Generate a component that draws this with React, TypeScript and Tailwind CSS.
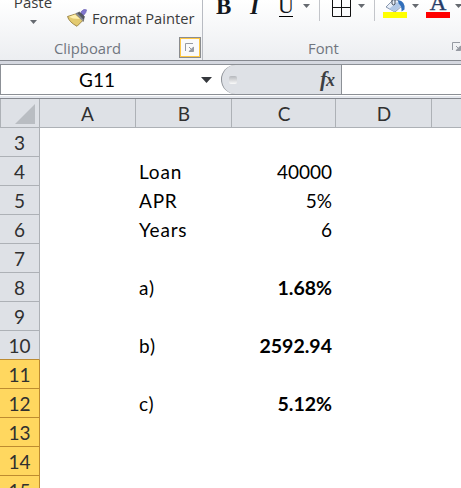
import React from "react";
import clsx from "clsx";

type Row = {
  id: number;
  label?: string;
  value?: string;
  bold?: boolean;
};

const rows: Row[] = [
  { id: 3 },
  { id: 4, label: "Loan", value: "40000" },
  { id: 5, label: "APR", value: "5%" },
  { id: 6, label: "Years", value: "6" },
  { id: 7 },
  { id: 8, label: "a)", value: "1.68%", bold: true },
  { id: 9 },
  { id: 10, label: "b)", value: "2592.94", bold: true },
  { id: 11 },
  { id: 12, label: "c)", value: "5.12%", bold: true },
  { id: 13 },
  { id: 14 },
  { id: 15 },
];

function Caret({ className }: { className?: string }) {
  return (
    <svg className={clsx("shrink-0", className)} width="7" height="4" viewBox="0 0 7 4">
      <path d="M0 0h7L3.500 4z" fill="#666a70" />
    </svg>
  );
}

function BrushIcon() {
  return (
    <svg className="shrink-0" width="20" height="18" viewBox="0 0 20 18">
      <path d="M13.500 5.500l1-3.200Q17-.8 19.500.8Q20 3 16.500 6.500z" fill="#8177ce" stroke="#6259ab" strokeWidth=".5" />
      <path d="M9 4.500L12.500 3l5 4.500-1.300 5z" fill="#555960" stroke="#3d4147" strokeWidth=".5" />
      <path d="M8.500 5L.5 7.500q1.500 5.500 9.500 9.800l6-6z" fill="#e3ca70" stroke="#8c7434" strokeWidth=".8" />
      <path d="M8 5.500L2 7.800l4 1.800L13 10z" fill="#fff0ac" />
      <path d="M9.500 4.500l6.500 6.800" stroke="#8c9097" strokeWidth="1.800" />
    </svg>
  );
}

function LauncherIcon() {
  return (
    <svg className="shrink-0" width="10" height="10" viewBox="0 0 10 10" fill="none" stroke="#969aa2">
      <path d="M.5 8V.5H8" />
      <path d="M4 4l3.500 3.500" />
      <path d="M8.500 3.500v5h-5z" fill="#969aa2" stroke="none" />
      <path d="M8.500 4v4.500H4" />
    </svg>
  );
}

function BorderIcon() {
  return (
    <svg className="shrink-0" width="19" height="17" viewBox="0 0 19 17" fill="none" stroke="#111">
      <path d="M.5 0v16.500h18V0M9.500 0v16M0 7.500h19" />
    </svg>
  );
}

function FillIcon() {
  return (
    <svg className="shrink-0" width="24" height="18" viewBox="0 0 24 18">
      <path d="M3 7l7-7h4l6 5-8 7z" fill="#e8eff9" stroke="#6c7f9b" strokeWidth=".8" />
      <path d="M6 9l8-7 4 3.500-6 6z" fill="#b1c8e6" />
      <path d="M9 0v4q2 2 3 0V0" fill="none" stroke="#48505c" />
      <path d="M15 0q7.500 1 6.500 9.500l-3 2Q19 6 15.500 3.500z" fill="#326fba" />
      <path d="M0 12h24v6H0z" fill="#ff0" />
    </svg>
  );
}

function RibbonSeparator() {
  return <div className="h-[21px] w-px shrink-0 bg-[#c3c5ca]" />;
}

function Ribbon() {
  return (
    <div className="flex h-[60px] shrink-0 overflow-hidden bg-linear-to-b from-white to-[#eceef1] font-['Open_Sans',sans-serif] text-[15px] text-[#3b3b3b]">
      <div className="flex w-[202px] shrink-0 flex-col">
        <div className="flex h-[36px] shrink-0">
          <div className="flex w-[66px] shrink-0 flex-col items-center">
            <span className="-mt-[8px] leading-[20px]">Paste</span>
            <Caret className="mt-[8px]" />
          </div>
          <div className="flex items-start pt-[9px] pl-px">
            <BrushIcon />
            <span className="-mt-px ml-[5px] text-[14.7px] leading-[20px] whitespace-nowrap">Format Painter</span>
          </div>
        </div>
        <div className="flex justify-between">
          <span className="pl-[54px] text-[14.8px] leading-[25px] text-[#70767f]">Clipboard</span>
          <div className="mt-[1px] mr-px flex h-[21px] w-[22px] items-center justify-center border border-[#8a8c8f] bg-[#fafafa] shadow-[inset_0_0_0_1px_#ffc843]">
            <LauncherIcon />
          </div>
        </div>
      </div>
      <div className="w-px shrink-0 bg-[#b8bbc2]" />
      <div className="flex w-[258px] shrink-0 flex-col">
        <div className="flex h-[36px] shrink-0 items-start font-['Liberation_Serif',serif] text-[23px] leading-[24px] text-[#14181d]">
          <span className="-mt-[5px] ml-[13px] w-[31px] shrink-0 font-bold">B</span>
          <span className="-mt-[5px] w-[32px] shrink-0 pl-[3px] font-bold italic">I</span>
          <span className="-mt-[6px] flex h-[23px] w-[14px] shrink-0 justify-center border-b border-black text-[22px]">U</span>
          <Caret className="mt-[4px] ml-[10px]" />
          <div className="ml-[9px]">
            <RibbonSeparator />
          </div>
          <div className="ml-[12px]">
            <BorderIcon />
          </div>
          <Caret className="mt-[4px] ml-[7px]" />
          <div className="ml-[9px]">
            <RibbonSeparator />
          </div>
          <div className="ml-[8px]">
            <FillIcon />
          </div>
          <Caret className="mt-[4px] ml-[5px]" />
          <div className="ml-[7px] h-[18px] w-[24px] shrink-0 border-b-[6px] border-[#f00] text-center text-[#263c68]">
            <span className="-mt-[9px] block text-[23px] [-webkit-text-stroke:0.4px_#263c68]">A</span>
          </div>
          <Caret className="mt-[4px] ml-[5px]" />
        </div>
        <div className="flex text-[14.8px] leading-[25px] text-[#70767f]">
          <span className="w-[249px] shrink-0 pl-[105px]">Font</span>
          <div className="mt-[6px]">
            <LauncherIcon />
          </div>
        </div>
      </div>
    </div>
  );
}

function FormulaBar() {
  return (
    <div className="flex h-[31px] shrink-0 border-y border-[#8c9096] bg-[#dee1e6]">
      <div className="flex w-[221px] shrink-0 items-center border-l border-[#8c9096] bg-white">
        <span className="w-[192px] pt-px text-center">G11</span>
        <svg className="ml-[8px]" width="11" height="6" viewBox="0 0 11 6">
          <path d="M0 0h11L5.500 6z" fill="#35383d" />
        </svg>
      </div>
      <div className="flex w-[121px] shrink-0 items-center bg-white">
        <div className="flex h-full w-full items-center justify-between rounded-l-[15px] border-r border-l border-[#8c9096] bg-[#dee1e6] pr-[7px] pl-[7px]">
          <span className="h-[8px] w-[8px] rounded-[2px] bg-linear-to-b from-[#b5b8bd] to-[#fafafa]" />
          <span className="font-['Liberation_Serif',serif] text-[21px] leading-[25px] font-bold tracking-[-1px] text-[#3c3f43] italic">
            f<span className="text-[18px]">x</span>
          </span>
        </div>
      </div>
      <div className="grow bg-white" />
    </div>
  );
}

function ColumnHeaders() {
  return (
    <div className="flex h-[29px] shrink-0 border-b border-[#adb1b6] bg-[#dee1e6] text-[#303030]">
      <div className="flex w-[40px] shrink-0 items-end justify-end border-r border-l border-[#adb1b6] pr-[4px] pb-[3px]">
        <svg width="20" height="20" viewBox="0 0 20 20">
          <path d="M20 0v20H0z" fill="#b9bdc2" />
        </svg>
      </div>
      <div className="w-[96px] shrink-0 border-r border-[#adb1b6] text-center leading-[30px]">A</div>
      <div className="w-[96px] shrink-0 border-r border-[#adb1b6] pl-px text-center leading-[30px]">B</div>
      <div className="w-[104px] shrink-0 border-r border-[#adb1b6] pl-px text-center leading-[30px]">C</div>
      <div className="w-[96px] shrink-0 border-r border-[#adb1b6] pl-px text-center leading-[30px]">D</div>
    </div>
  );
}

function SheetRow({ row }: { row: Row }) {
  const selected = row.id >= 11;
  return (
    <div className="flex h-[29px] shrink-0 leading-[30px]">
      <div
        className={clsx(
          "w-[40px] shrink-0 border-r border-b text-center text-[#303030]",
          selected ? "border-[#bd8b30] bg-[#ffd75f]" : "border-[#adb1b6] bg-[#dee1e6]",
          row.id === 10 && "border-b-[#bd8b30]"
        )}
      >
        {row.id}
      </div>
      <div className="w-[96px] shrink-0" />
      <div className="w-[96px] shrink-0 pl-[3px] tracking-[0.8px]">{row.label}</div>
      <div className={clsx("w-[100px] shrink-0 text-right", row.bold && "text-[19.5px] font-bold")}>{row.value}</div>
    </div>
  );
}

export default function App() {
  return (
    <div className="flex h-[488px] w-[461px] flex-col overflow-hidden bg-white font-[Lato,sans-serif] text-[19px] text-black">
      <Ribbon />
      <div className="h-[4px] shrink-0 border-t border-[#85888f] bg-[#d5d8e0]" />
      <FormulaBar />
      <div className="h-[4px] shrink-0 border-t border-b border-t-white border-b-[#85888f] bg-[#e4e7ed]" />
      <ColumnHeaders />
      {rows.map((row) => (
        <SheetRow key={row.id} row={row} />
      ))}
    </div>
  );
}
